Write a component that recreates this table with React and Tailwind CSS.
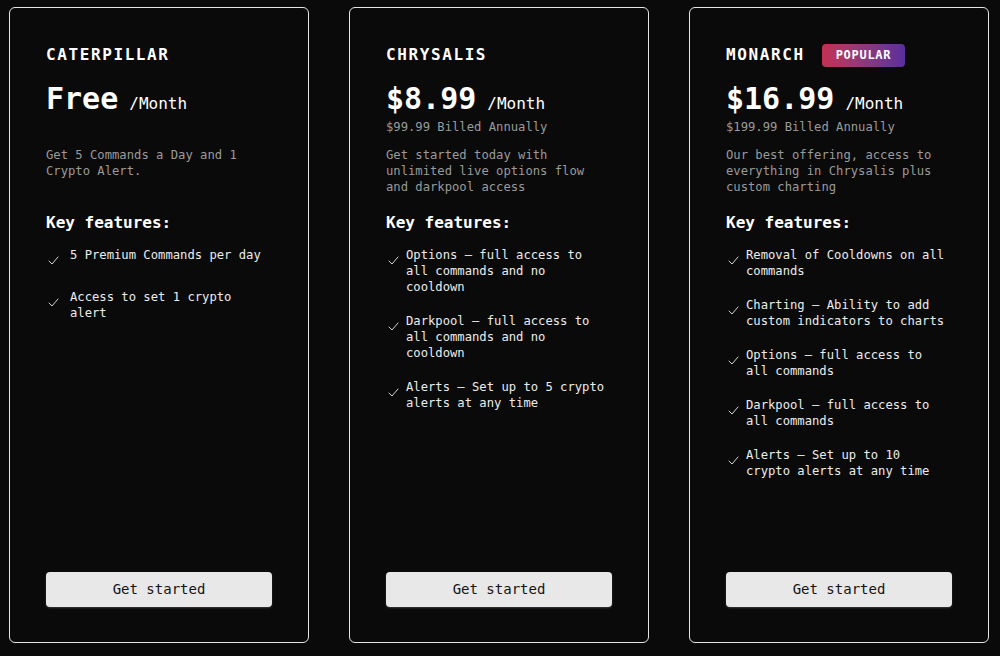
import React from 'react';

const plans = [
    {
        name: 'CATERPILLAR',
        price: 'Free',
        billed: '',
        description: 'Get 5 Commands a Day and 1 Crypto Alert.',
        iconWidth: 'w-6',
        features: ['5 Premium Commands per day', 'Access to set 1 crypto alert'],
    },
    {
        name: 'CHRYSALIS',
        price: '$8.99',
        billed: '$99.99 Billed Annually',
        description: 'Get started today with unlimited live options flow and darkpool access',
        iconWidth: 'w-5',
        features: [
            'Options — full access to all commands and no cooldown',
            'Darkpool — full access to all commands and no cooldown',
            'Alerts — Set up to 5 crypto alerts at any time',
        ],
    },
    {
        name: 'MONARCH',
        popular: true,
        price: '$16.99',
        billed: '$199.99 Billed Annually',
        description: 'Our best offering, access to everything in Chrysalis plus custom charting',
        iconWidth: 'w-5',
        features: [
            'Removal of Cooldowns on all commands',
            'Charting — Ability to add custom indicators to charts',
            'Options — full access to all commands',
            'Darkpool — full access to all commands',
            'Alerts — Set up to 10 crypto alerts at any time',
        ],
    },
];

function Check({ width }) {
    return (
        <div className={`${width} h-6 shrink-0 flex items-center pl-[2px] pt-[2px]`}>
            <svg width="11" height="9" viewBox="0 0 11 9" fill="none">
                <path d="M1 5 L4 8 L10 1" stroke="#d4d4d4" strokeWidth="1" strokeLinecap="round" strokeLinejoin="round" />
            </svg>
        </div>
    );
}

function PlanCard({ plan }) {
    return (
        <div className="w-[300px] h-[636px] shrink-0 rounded-md border border-[#e6e6e6] bg-[#0a0a0a] px-[36px] pt-[35px] pb-[35px] flex flex-col">
            <div className="h-6 flex items-center gap-[17px]">
                <h3 className="text-[16px] leading-6 font-bold tracking-[0.1em] text-white">{plan.name}</h3>
                {plan.popular && (
                    <span className="h-[23px] px-[14px] rounded-[4px] bg-gradient-to-r from-[#c42f52] to-[#5a2c9c] text-white text-[12px] font-bold tracking-[0.06em] flex items-center">
                        POPULAR
                    </span>
                )}
            </div>
            <div className="mt-[14px] flex items-baseline gap-[11px] text-white">
                <span className="text-[30px] leading-9 font-bold">{plan.price}</span>
                <span className="text-[16px]">/Month</span>
            </div>
            <p className="mt-[2px] h-4 text-[12.2px] leading-4 text-[#9a9a9a]">{plan.billed}</p>
            <p className="mt-[12px] h-12 text-[12.2px] leading-4 text-[#9a9a9a]">{plan.description}</p>
            <h4 className="mt-[16px] text-[16px] leading-6 font-bold text-white">Key features:</h4>
            <ul className="mt-[12px] flex flex-col gap-[18px]">
                {plan.features.map((f) => (
                    <li key={f} className="flex min-h-6">
                        <Check width={plan.iconWidth} />
                        <span className="max-w-[201px] text-[12.2px] leading-4 text-[#ececec]">{f}</span>
                    </li>
                ))}
            </ul>
            <button className="mt-auto h-[35px] w-full rounded-[4px] bg-[#e8e8e8] text-[#141414] text-[14px] shadow-[0_1px_2px_rgba(255,255,255,0.2)]">
                Get started
            </button>
        </div>
    );
}

function App() {
    return (
        <div
            className="min-h-screen bg-[#0a0a0a] pt-[7px] pl-[9px] flex gap-[40px]"
            style={{ fontFamily: '"DejaVu Sans Mono", "Liberation Mono", monospace' }}
        >
            {plans.map((p) => (
                <PlanCard key={p.name} plan={p} />
            ))}
        </div>
    );
}

export default App;
